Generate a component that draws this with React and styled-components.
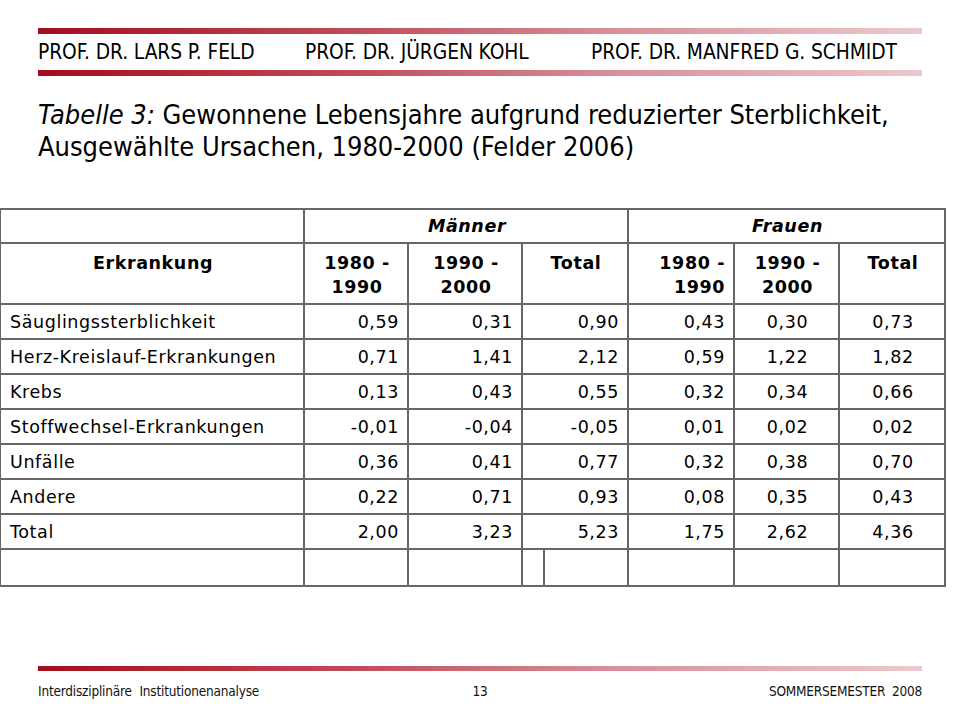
import styled, { createGlobalStyle } from "styled-components";

const GlobalStyle = createGlobalStyle`
  html, body {
    margin: 0;
    padding: 0;
    background: #ffffff;
  }
  body {
    width: 960px;
    height: 720px;
    overflow: hidden;
  }
`;

const Slide = styled.div`
  position: relative;
  width: 960px;
  height: 720px;
  display: flex;
  flex-direction: column;
  font-family: "DejaVu Sans", Verdana, sans-serif;
  color: #000000;
`;

const Bar = styled.div`
  height: ${(p) => p.$h || 6}px;
  margin: 0 38px;
  background: linear-gradient(to right, #a30d1d 0%, #c04a57 35%, #d88f98 65%, #ecc9cd 100%);
`;

const Header = styled.header`
  padding-top: 28px;
  display: flex;
  flex-direction: column;
`;

const Names = styled.div`
  height: 36px;
  margin: 0 38px;
  display: grid;
  grid-template-columns: 267px 286px 1fr;
  align-items: center;
  font-family: "DejaVu Sans Condensed", "DejaVu Sans", sans-serif;
  font-size: 20.8px;
  letter-spacing: -0.1px;
`;

const Title = styled.h1`
  margin: 23px 38px 0;
  font-family: "DejaVu Sans Condensed", "DejaVu Sans", sans-serif;
  font-weight: normal;
  font-size: 27px;
  line-height: 32px;
  letter-spacing: -0.02px;

  em {
    font-style: italic;
  }
`;

const Table = styled.table`
  margin-top: 45px;
  margin-left: -1px;
  width: 945px;
  border-collapse: collapse;
  table-layout: fixed;
  font-size: 17.5px;
  letter-spacing: 0.6px;
`;

const Cell = styled.td`
  border: 2px solid #666666;
  border-left-color: ${(p) => p.$lc || "#666666"};
  height: ${(p) => p.$h || 33}px;
  padding: 0 ${(p) => (p.$align === "right" ? 8 : 7)}px 0 9px;
  text-align: ${(p) => p.$align || "left"};
  vertical-align: ${(p) => p.$valign || "middle"};
  font-weight: ${(p) => (p.$bold ? "bold" : "normal")};
  font-style: ${(p) => (p.$italic ? "italic" : "normal")};
  line-height: 24px;
  white-space: nowrap;
`;

const HeadCell = styled(Cell).attrs({ as: "th" })`
  padding-top: ${(p) => (p.$valign === "top" ? 7 : 0)}px;
`;

const FooterArea = styled.footer`
  margin-top: auto;
  padding-bottom: 21px;
  display: flex;
  flex-direction: column;
`;

const FooterRow = styled.div`
  margin: 12px 38px 0;
  display: grid;
  grid-template-columns: 1fr auto 1fr;
  font-family: "DejaVu Sans Condensed", "DejaVu Sans", sans-serif;
  font-size: 13.5px;
  letter-spacing: -0.2px;
  color: #111;
`;

const FooterText = styled.span`
  text-align: ${(p) => p.$align || "left"};
  word-spacing: ${(p) => p.$ws || 0}px;
`;

const rows = [
  ["Säuglingssterblichkeit", "0,59", "0,31", "0,90", "0,43", "0,30", "0,73"],
  ["Herz-Kreislauf-Erkrankungen", "0,71", "1,41", "2,12", "0,59", "1,22", "1,82"],
  ["Krebs", "0,13", "0,43", "0,55", "0,32", "0,34", "0,66"],
  ["Stoffwechsel-Erkrankungen", "-0,01", "-0,04", "-0,05", "0,01", "0,02", "0,02"],
  ["Unfälle", "0,36", "0,41", "0,77", "0,32", "0,38", "0,70"],
  ["Andere", "0,22", "0,71", "0,93", "0,08", "0,35", "0,43"],
  ["Total", "2,00", "3,23", "5,23", "1,75", "2,62", "4,36"],
];

const align = ["left", "right", "right", "right", "right", "center", "center"];
const greenRows = [4, 5, 6];

export default function App() {
  return (
    <>
      <GlobalStyle />
      <Slide>
        <Header>
          <Bar />
          <Names>
            <span>PROF. DR. LARS P. FELD</span>
            <span>PROF. DR. JÜRGEN KOHL</span>
            <span>PROF. DR. MANFRED G. SCHMIDT</span>
          </Names>
          <Bar />
        </Header>

        <Title>
          <em>Tabelle 3:</em> Gewonnene Lebensjahre aufgrund reduzierter Sterblichkeit,
          <br />
          Ausgewählte Ursachen, 1980-2000 (Felder 2006)
        </Title>

        <Table>
          <colgroup>
            <col style={{ width: 304 }} />
            <col style={{ width: 104 }} />
            <col style={{ width: 114 }} />
            <col style={{ width: 22 }} />
            <col style={{ width: 84 }} />
            <col style={{ width: 106 }} />
            <col style={{ width: 105 }} />
            <col style={{ width: 106 }} />
          </colgroup>
          <thead>
            <tr>
              <HeadCell $h={32} />
              <HeadCell $h={32} colSpan={4} $align="center" $bold $italic>
                Männer
              </HeadCell>
              <HeadCell $h={32} colSpan={3} $align="center" $bold $italic>
                Frauen
              </HeadCell>
            </tr>
            <tr>
              <HeadCell $h={52} $align="center" $valign="top" $bold>
                Erkrankung
              </HeadCell>
              <HeadCell $h={52} $align="center" $valign="top" $bold>
                1980 -<br />1990
              </HeadCell>
              <HeadCell $h={52} $align="center" $valign="top" $bold>
                1990 -<br />2000
              </HeadCell>
              <HeadCell $h={52} colSpan={2} $align="center" $valign="top" $bold>
                Total
              </HeadCell>
              <HeadCell $h={52} $align="right" $valign="top" $bold>
                1980 -<br />1990
              </HeadCell>
              <HeadCell $h={52} $align="center" $valign="top" $bold>
                1990 -<br />2000
              </HeadCell>
              <HeadCell $h={52} $align="center" $valign="top" $bold>
                Total
              </HeadCell>
            </tr>
          </thead>
          <tbody>
            {rows.map((r, ri) => (
              <tr key={r[0]}>
                {r.map((v, ci) => (
                  <Cell
                    key={ci}
                    colSpan={ci === 3 ? 2 : 1}
                    $align={align[ci]}
                    $lc={ci === 4 && greenRows.includes(ri) ? "#2f9a2f" : undefined}
                  >
                    {v}
                  </Cell>
                ))}
              </tr>
            ))}
            <tr>
              {Array.from({ length: 8 }).map((_, i) => (
                <Cell key={i} $h={35} />
              ))}
            </tr>
          </tbody>
        </Table>

        <FooterArea>
          <Bar $h={5} />
          <FooterRow>
            <FooterText $ws={4}>Interdisziplinäre Institutionenanalyse</FooterText>
            <FooterText $align="center">13</FooterText>
            <FooterText $align="right" $ws={3}>SOMMERSEMESTER 2008</FooterText>
          </FooterRow>
        </FooterArea>
      </Slide>
    </>
  );
}
